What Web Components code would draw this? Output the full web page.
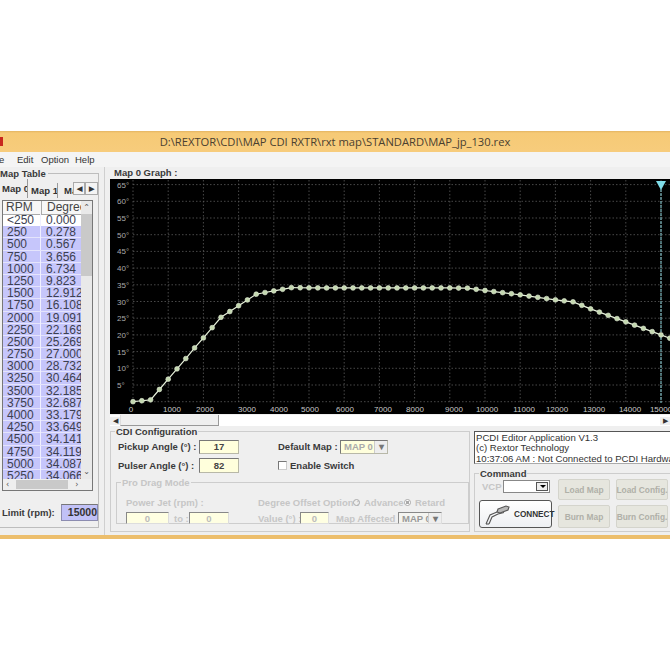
<!DOCTYPE html>
<html>
<head>
<meta charset="utf-8">
<title>PCDI Editor</title>
<style>
html, body { margin: 0; padding: 0; background: #fff; }
body { width: 670px; height: 670px; overflow: hidden; font-family: "Liberation Sans", Arial, sans-serif; }
</style>
</head>
<body>
<app-window>
  <title-bar>D:\REXTOR\CDI\MAP CDI RXTR\rxt map\STANDARD\MAP_jp_130.rex</title-bar>
  <menu-bar></menu-bar>
  <div style="display:flex;height:368px;background:#efefef">
    <map-table></map-table>
    <div style="width:566px;flex:none;border-left:1px solid #cfcfcf;padding-left:5px;box-sizing:border-box">
      <map-graph></map-graph>
      <div style="display:flex;margin-top:5px">
        <cdi-config></cdi-config>
        <div style="width:196px;margin-left:4px;flex:none">
          <status-log></status-log>
          <command-panel></command-panel>
        </div>
      </div>
    </div>
  </div>
</app-window>
<script>
// shared styles for the old swing-looking widgets
const baseCss = `
  * { box-sizing: border-box; }
  .b { font-weight: bold; font-size: 9.5px; color: #3a3a3a; white-space: nowrap; }
  .off { color: #c6c6c6; }
  .field { display: flex; align-items: center; justify-content: center; flex: none;
    background: #ffffdc; font-size: 9.5px; font-weight: bold; color: #444;
    border: 1px solid #b8b8a8; border-top-color: #777; border-left-color: #777; }
`;

function define(name, css, html, setup) {
  customElements.define(name, class extends HTMLElement {
    constructor() {
      super();
      this.attachShadow({ mode: 'open' });
      this.shadowRoot.innerHTML = `<style>${baseCss}${css}</style>${html}`;
      if (setup) setup(this.shadowRoot, this);
    }
  });
}

define('app-window', `
  :host { display: block; width: 670px; margin-top: 131px; border-bottom: 4px solid #ecbe6c; }
`, `<slot></slot>`);

define('title-bar', `
  :host { display: flex; align-items: center; justify-content: center; height: 21px; position: relative;
    background: linear-gradient(#e3b562 0, #f6ca76 2px, #f7cc7c 100%);
    font: 11.2px "Open Sans", sans-serif; color: #4a4030; padding-left: 0; }
  .ico { position: absolute; left: 0; top: 6px; width: 3px; height: 9px; background: #c8281e; }
`, `<span class="ico"></span><slot></slot>`);

define('menu-bar', `
  :host { display: flex; height: 15px; align-items: center; background: #f4f4f4; font: 9.5px "Liberation Sans", sans-serif;
    color: #333; margin-left: -11px; }
  span { margin-left: 0; }
`, `<span style="width:28px">File</span><span style="width:24px">Edit</span><span style="width:34px">Option</span><span>Help</span>`);

define('group-box', `
  :host { display: block; position: relative; border: 1px solid #cdcdcd; box-sizing: border-box; }
  .cap { position: absolute; left: 4px; top: -6px; background: #efefef; padding: 0 1px; line-height: 11px;
    font: bold 9.5px "Liberation Sans", sans-serif; color: var(--cap, #3a3a3a); white-space: nowrap; }
`, `<span class="cap"></span><slot></slot>`, (root, el) => {
  queueMicrotask(() => { root.querySelector('.cap').textContent = el.getAttribute('label'); });
});

define('map-table', `
  :host { display: block; width: 104px; flex: none; }
  .box { margin: 6px 5px 0 -6px; height: 355px; position: relative; border: 1px solid #bdbdbd; border-left: 0; }
  .cap { position: absolute; left: 6px; top: -6px; background: #efefef; padding-right: 2px; }
  .tabs { display: flex; height: 19px; margin: 5px 0 0 6px; font: bold 9.5px "Liberation Sans", sans-serif; color: #333; align-items: flex-end; }
  .tabs span { display: flex; align-items: center; height: 18px; border-right: 1px solid #999; white-space: nowrap; overflow: hidden; }
  .tabs .nav { width: 12px; height: 13px; margin-bottom: 3px; justify-content: center; background: #f4f4f4; border: 1px solid #aaa; font-size: 7px; flex: none; }
  .grid { margin: 2px 0 0 8px; width: 91px; height: 291px; border: 1px solid #777; background: #fff; position: relative; display: grid;
    grid-template-columns: 1fr 11px; grid-template-rows: 1fr 11px; }
  .rows { overflow: hidden; font: 12px "Liberation Sans", sans-serif; color: #3c4050; }
  .row { display: grid; grid-template-columns: 38px 40px; height: 12.2px; line-height: 12px; background: #c6c6fb; border-bottom: 1px solid #e4e4fb; }
  .row:first-of-type, .row.first { background: #fff; border-bottom-color: #fff; }
  .row span:first-child { padding-left: 4px; border-right: 1px solid #f0f0ff; }
  .row span:last-child { padding-left: 5px; }
  .head { display: grid; grid-template-columns: 39px 40px; height: 13px; line-height: 13px; background: #f7f7f7; color: #444; }
  .head span { padding-left: 3px; border-right: 1px solid #aaa; border-bottom: 1px solid #aaa; }
  .head span:last-child { padding-left: 5px; border-right: 0; }
  .vbar { background: #e9e9e9; position: relative; }
  .vbar i { position: absolute; left: 0; right: 0; top: 13px; height: 62px; background: #c9c9c9; }
  .vbar b { position: absolute; left: 0; right: 0; text-align: center; font: 8px "DejaVu Sans", sans-serif; color: #555; }
  .hbar { background: #eee; display: flex; align-items: center; grid-column: 1 / 3; font: 8px "DejaVu Sans", sans-serif; color: #555; padding: 0 3px; }
  .hbar i { width: 52px; height: 9px; background: #c9c9c9; margin: 0 7px 0 7px; }
  .limit { display: flex; align-items: center; margin: 13px 0 0 8px; }
  .limit .in { width: 38px; height: 17px; margin-left: 6px; background: #c1c1f7; border: 1px solid #8c8cb0; border-top-color:#777;
    font: bold 10.5px "Liberation Sans", sans-serif; color: #333; text-align: right; line-height: 15px; padding-right: 0; }
`, `
  <div class="box">
    <span class="cap b">Map Table</span>
    <div class="tabs">
      <span style="width:28px;height:19px;padding-left:2px">Map 0</span>
      <span style="width:30px;padding-left:3px;height:15px;font-size:9.5px">Map 1</span>
      <span style="width:16px;padding-left:6px;height:15px;border:0">Ma</span>
      <span class="nav" style="margin-left:-1px">&#9664;</span>
      <span class="nav" style="width:13px">&#9654;</span>
    </div>
    <div class="grid">
      <div class="rows">
        <div class="head"><span>RPM</span><span>Degree</span></div>
        <div id="rows"></div>
      </div>
      <div class="vbar"><b style="top:2px">&#8963;</b><i></i><b style="bottom:3px">&#8964;</b></div>
      <div class="hbar"><span>&#8249;</span><i></i><span>&#8250;</span></div>
    </div>
    <div class="limit"><span class="b">Limit (rpm):</span><div class="in">15000</div></div>
  </div>
`, root => {
  const data = [['<250','0.000'],['250','0.278'],['500','0.567'],['750','3.656'],['1000','6.734'],['1250','9.823'],
    ['1500','12.912'],['1750','16.108'],['2000','19.091'],['2250','22.169'],['2500','25.269'],['2750','27.000'],
    ['3000','28.732'],['3250','30.464'],['3500','32.185'],['3750','32.687'],['4000','33.179'],['4250','33.649'],
    ['4500','34.141'],['4750','34.119'],['5000','34.087'],['5250','34.066']];
  root.getElementById('rows').innerHTML = data.map((d, i) =>
    `<div class="row${i ? '' : ' first'}"><span>${d[0]}</span><span>${d[1]}</span></div>`).join('');
});

define('map-graph', `
  :host { display: block; }
  .t { display: block; height: 12px; line-height: 11px; padding-left: 4px; }
  svg { display: block; margin: 0; }
  .sb { display: flex; height: 11px; background: #fff; width: 560px; margin-top: 1px; align-items: center; font-size: 7px; color: #333; }
  .sb .a { width: 10px; text-align: center; background: #efefef; }
  .sb i { width: 99px; height: 11px; background: #efefef; border: 1px solid #999; border-top: 0; border-left-color: #ddd; }
  .sb u { flex: 1; }
`, `
  <span class="t b">Map 0 Graph :</span>
  <svg id="g" width="560" height="235" viewBox="110 179 560 235"></svg>
  <div class="sb"><span class="a">&#9664;</span><i></i><u></u><span class="a">&#9654;</span></div>
`, root => {
  const X = r => 133 + r * 0.0352;
  const Y = d => 401.7 - d * 3.34;
  // read off the table up to 5250, then off the curve
  const pts = [0,.278,.567,3.656,6.734,9.823,12.912,16.108,19.091,22.169,25.269,27,28.732,30.464,32.185,32.687,33.179,33.649,34.141,34.119,34.087,34.066];
  const tail = [[5500,34.05],[9000,34.05],[9500,34],[10000,33.3],[11000,32],[12000,30.5],[12500,29.9],[13000,27.8],[14000,23.9],[15000,20],[15250,19]];
  for (let r = 5500; r <= 15250; r += 250) {
    let i = tail.findIndex(t => t[0] >= r);
    if (tail[i][0] === r) { pts.push(tail[i][1]); continue; }
    const a = tail[i - 1], b = tail[i];
    pts.push(a[1] + (b[1] - a[1]) * (r - a[0]) / (b[0] - a[0]));
  }
  let s = '<rect x="110" y="179" width="560" height="235" fill="#000"/>';
  const gridAttr = 'stroke="#5a5a5a" stroke-width=".8" stroke-dasharray="1.5 2"';
  for (let d = 0; d <= 65; d += 5) s += `<line x1="133" x2="670" y1="${Y(d)}" y2="${Y(d)}" ${gridAttr}/>`;
  for (let r = 0; r <= 15000; r += 1000) s += `<line x1="${X(r)}" x2="${X(r)}" y1="180" y2="403" ${gridAttr}/>`;
  for (let d = 5; d <= 65; d += 5) s += `<text x="117" y="${Y(d) + 3}" font-size="8" fill="#aaa">${d}°</text>`;
  const xl = [131,172,205,247,279,310,345,383,415,454,487,524,557,594,630,661];
  xl.forEach((x, i) => { s += `<text x="${x}" y="412" text-anchor="middle" font-size="8" fill="#c8c8c8">${i * 1000}</text>`; });
  s += `<line x1="661" x2="661" y1="185" y2="403" stroke="#8fd8e0" stroke-width="1" stroke-dasharray="3 1"/>`;
  s += `<path d="M656 181h10l-5 9z" fill="#7fdce8"/>`;
  s += `<polyline fill="none" stroke="#e8f2dc" stroke-width="1.2" points="${pts.map((d, i) => X(i * 250) + ',' + Y(d)).join(' ')}"/>`;
  pts.forEach((d, i) => { s += `<circle cx="${X(i * 250)}" cy="${Y(d)}" r="2.4" fill="#c4d8b0" stroke="#e4eed8" stroke-width=".6"/>`; });
  root.getElementById('g').innerHTML = s;
});

define('cdi-config', `
  :host { display: block; width: 360px; flex: none; height: 101px; }
  group-box { height: 100%; padding: 7px 0 0 7px; }
  .row { display: flex; align-items: center; height: 15px; margin-top: 0; }
  .row + .row { margin-top: 4px; }
  .lab { width: 81px; flex: none; }
  .sel { width: 48px; justify-content: flex-start; padding-left: 3px; color: #aaa; position: relative; }
  .sel::after { content: "\\25BE"; position: absolute; right: 0; top: 0; bottom: 0; width: 12px; background: #eee; border-left: 1px solid #ccc; color: #777; text-align: center; line-height: 12px; }
  .chk { width: 9px; height: 9px; border: 1px solid #777; border-right-color: #ccc; border-bottom-color: #ccc; background: #fff; margin-right: 3px; }
  .drag { --cap: #c6c6c6; display: block; width: 353px; height: 42px; margin: 9px 0 0 -2px; font: bold 9.5px "Liberation Sans", sans-serif; }
  .dr { display: flex; align-items: center; height: 12px; padding-left: 2px; white-space: nowrap; }
  .f2 { background: #ffffe2; color: #bbb; border-color: #ddd; border-top-color: #888; border-left-color: #888; height: 12px; }
  .radio { width: 7px; height: 7px; border-radius: 50%; border: 1px solid #aaa; margin: 0 4px 0 0; display: inline-block; }
  .radio.on { background: radial-gradient(#aaa 40%, #fff 45%); }
`, `
  <group-box label="CDI Configuration">
    <div class="row">
      <span class="b lab">Pickup Angle (°) :</span><span class="field" style="width:40px;height:14px">17</span>
      <span class="b" style="margin-left:39px;width:62px">Default Map :</span>
      <span class="field sel" style="height:14px">MAP 0</span>
    </div>
    <div class="row">
      <span class="b lab">Pulser Angle (°) :</span><span class="field" style="width:40px;height:15px">82</span>
      <span class="chk" style="margin-left:39px"></span><span class="b">Enable Switch</span>
    </div>
    <group-box class="drag" label="Pro Drag Mode">
      <div class="dr off" style="margin-top:6px">
        <span style="width:132px">Power Jet (rpm) :</span>
        <span style="width:95px">Degree Offset Option :</span>
        <span class="radio"></span><span style="width:40px">Advance</span>
        <span class="radio on"></span><span>Retard</span>
      </div>
      <div class="dr off" style="margin-top:4px">
        <span class="field f2" style="width:43px">0</span><span style="margin:0 3px 0 5px;width:12px">to :</span>
        <span class="field f2" style="width:40px">0</span>
        <span style="margin-left:29px;width:42px">Value (°) :</span>
        <span class="field f2" style="width:29px">0</span>
        <span style="margin-left:7px;width:62px">Map Affected :</span>
        <span class="field f2 sel" style="width:44px;color:#999;background:#f4f4f0">MAP 0</span>
      </div>
    </group-box>
  </group-box>
`);

define('status-log', `
  :host { display: block; height: 33px; background: #fff; border: 1px solid #aaa; border-top-color: #555; border-left-color: #555; border-right: 0;
    font: 9.6px/10.4px "Liberation Sans", sans-serif; color: #333; padding: 1px 0 0 1px; box-sizing: border-box; white-space: nowrap; }
`, `<div>PCDI Editor Application V1.3</div><div>(c) Rextor Technology</div><div>10:37:06 AM : Not Connected to PCDI Hardware</div>`);

define('command-panel', `
  :host { display: block; height: 59px; margin-top: 9px; }
  group-box { height: 100%; border-right: 0; padding: 6px 0 0 4px; display: grid; grid-template-columns: 73px 52px 52px; column-gap: 6px; }
  .left { display: flex; flex-direction: column; }
  .vcp { display: flex; align-items: center; height: 13px; }
  .combo { width: 47px; height: 13px; margin-left: 2px; background: #fff; border: 1px solid #888; position: relative; }
  .combo::after { content: ""; position: absolute; right: 1px; top: 1px; bottom: 1px; width: 10px; background: #eee; border: 1px solid #555; }
  .combo::before { content: ""; position: absolute; z-index: 1; right: 3px; top: 4px; border: 3px solid transparent; border-top-color: #000; }
  .connect { display: flex; align-items: center; height: 28px; width: 73px; margin-top: 7px; border: 1px solid #555; border-radius: 3px; background: linear-gradient(#fff, #eef0f3); }
  .connect svg { margin: 0 3px 0 3px; flex: none; }
  .connect span { font: bold 8.2px "Liberation Sans", sans-serif; color: #333; }
  .btns { display: grid; grid-template-rows: 21px 23px; row-gap: 5px; grid-column: span 2; grid-template-columns: 52px 52px; column-gap: 6px; margin-top: -1px; }
  .btn { display: flex; align-items: center; justify-content: center; background: #e6e6de; border: 1px solid #d4d4cc; border-radius: 2px; font: bold 8.4px "Liberation Sans", sans-serif; color: #b0b0a8; white-space: nowrap; }
`, `
  <group-box label="Command">
    <div class="left">
      <div class="vcp"><span class="b off" style="width:22px;padding-left:3px">VCP :</span><span class="combo"></span></div>
      <div class="connect">
        <svg width="28" height="24" viewBox="0 0 28 24" fill="none" stroke="#555" stroke-width="1.1">
          <path d="M3 22l4-9 7-3 8-2"/><path d="M6 22l3-7 6-3 6-1.5"/>
          <path d="M15 7l8-3 3 1-1 3-8 3-3-1z" fill="#b8b8b8"/>
          <path d="M3 22l3 0"/>
        </svg>
        <span>CONNECT</span>
      </div>
    </div>
    <div class="btns">
      <div class="btn">Load Map</div><div class="btn">Load Config.</div>
      <div class="btn">Burn Map</div><div class="btn">Burn Config.</div>
    </div>
  </group-box>
`);

define('menu-placeholder', '', '');
</script>
</body>
</html>
